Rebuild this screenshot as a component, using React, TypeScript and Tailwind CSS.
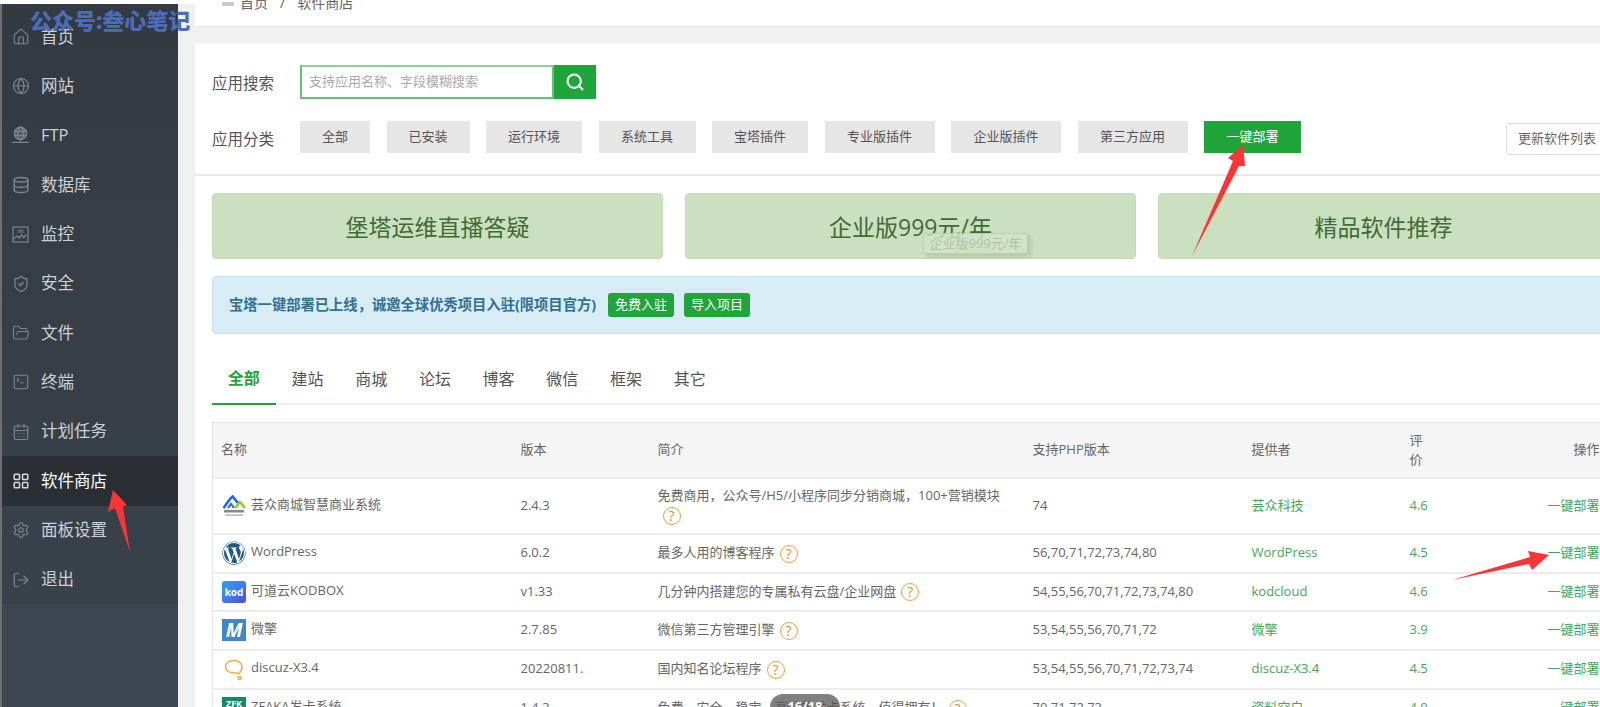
import { House, Globe, Database, ShieldCheck, FolderOpen, SquareTerminal, CalendarDays, LayoutGrid, Settings, LogOut, Search } from "lucide-react";
import { FaWordpress } from "react-icons/fa";
import type { ReactNode } from "react";

const FtpIcon = () => (
  <svg width="19" height="19" viewBox="0 0 18 18" fill="none" stroke="currentColor" strokeWidth="1.3">
    <circle cx="9" cy="7" r="5.8" fill="#6b7278" fillOpacity="0.5" />
    <ellipse cx="9" cy="7" rx="2.6" ry="5.8" />
    <path d="M3.4 5h11.2M3.4 9h11.2M9 13v2M1 15.5h16" />
  </svg>
);

const MonitorIcon = () => (
  <svg width="17" height="17" viewBox="0 0 17 17" fill="none" stroke="currentColor" strokeWidth="1.2">
    <rect x="1" y="1" width="15" height="15" />
    <rect x="5.5" y="3.5" width="6" height="3.5" fill="currentColor" fillOpacity="0.5" stroke="none" />
    <path d="M1.5 13l3.5-3 2.5 2 2-3.5 2 3 3-2.5" />
  </svg>
);

const menu: { label: string; icon: ReactNode; active?: boolean }[] = [
  { label: "首页", icon: <House size={18} strokeWidth={1.5} /> },
  { label: "网站", icon: <Globe size={18} strokeWidth={1.6} /> },
  { label: "FTP", icon: <FtpIcon /> },
  { label: "数据库", icon: <Database size={18} strokeWidth={2} /> },
  { label: "监控", icon: <MonitorIcon /> },
  { label: "安全", icon: <ShieldCheck size={18} strokeWidth={1.7} /> },
  { label: "文件", icon: <FolderOpen size={18} strokeWidth={1.5} /> },
  { label: "终端", icon: <SquareTerminal size={18} strokeWidth={1.5} /> },
  { label: "计划任务", icon: <CalendarDays size={18} strokeWidth={1.6} /> },
  { label: "软件商店", icon: <LayoutGrid size={18} strokeWidth={2} />, active: true },
  { label: "面板设置", icon: <Settings size={18} strokeWidth={1.6} /> },
  { label: "退出", icon: <LogOut size={18} strokeWidth={1.6} /> },
];

const categories: { label: string; w: string }[] = [
  { label: "全部", w: "w-[70px]" },
  { label: "已安装", w: "w-[83px]" },
  { label: "运行环境", w: "w-[96px]" },
  { label: "系统工具", w: "w-[97px]" },
  { label: "宝塔插件", w: "w-[96px]" },
  { label: "专业版插件", w: "w-[110px]" },
  { label: "企业版插件", w: "w-[110px]" },
  { label: "第三方应用", w: "w-[110px]" },
];

const tabs = ["全部", "建站", "商城", "论坛", "博客", "微信", "框架", "其它"];

const YunLogo = () => (
  <svg width="24" height="22" viewBox="0 0 24 22" fill="none">
    <path d="M1.5 13L8 4l2.6-2.5L16 8" stroke="#2563eb" strokeWidth="2.6" />
    <path d="M6 13l3-4 3 4" stroke="#2563eb" strokeWidth="2" />
    <path d="M13 13l5-6 5 6" stroke="#8cc81f" strokeWidth="2.4" />
    <rect x="2" y="15" width="20" height="2.5" fill="#555" fillOpacity="0.7" />
    <rect x="3" y="19.5" width="18" height="1.2" fill="#666" fillOpacity="0.6" />
  </svg>
);

const DiscuzLogo = () => (
  <svg width="24" height="24" viewBox="0 0 24 24" fill="none" stroke="#f3a84c" strokeWidth="1.5">
    <path d="M11.5 3.5c5 0 8.5 2.6 8.5 6.3 0 3.2-1.8 5.6-3.6 7.2-1-.8-2.6-1.2-4.5-1.2C7 15.800 3.500 13.500 3.500 9.800 3.500 6.100 7 3.500 11.500 3.500z" />
    <circle cx="17.500" cy="21" r="1.600" />
  </svg>
);

const rows: { logo: ReactNode; name: string; ver: string; desc: string; php: string; by: string; rate: string; h: string }[] = [
  { logo: <YunLogo />, name: "芸众商城智慧商业系统", ver: "2.4.3", desc: "免费商用\uFF0C公众号/H5/小程序同步分销商城\uFF0C100+营销模块", php: "74", by: "芸众科技", rate: "4.6", h: "h-[56px]" },
  { logo: <FaWordpress size={24} color="#1f5a85" />, name: "WordPress", ver: "6.0.2", desc: "最多人用的博客程序", php: "56,70,71,72,73,74,80", by: "WordPress", rate: "4.5", h: "h-[39px]" },
  {
    logo: <span className="flex h-[22px] w-[24px] items-center justify-center rounded-[3px] bg-gradient-to-br from-[#08a8f5] to-[#4f46e5] text-[10px] font-bold leading-none text-white">kod</span>,
    name: "可道云KODBOX", ver: "v1.33", desc: "几分钟内搭建您的专属私有云盘/企业网盘", php: "54,55,56,70,71,72,73,74,80", by: "kodcloud", rate: "4.6", h: "h-[38px]",
  },
  {
    logo: <span className="flex h-[22px] w-[24px] items-center justify-center bg-[#3f87c7] text-[19px] font-bold italic leading-none text-white">M</span>,
    name: "微擎", ver: "2.7.85", desc: "微信第三方管理引擎", php: "53,54,55,56,70,71,72", by: "微擎", rate: "3.9", h: "h-[39px]",
  },
  { logo: <DiscuzLogo />, name: "discuz-X3.4", ver: "20220811.", desc: "国内知名论坛程序", php: "53,54,55,56,70,71,72,73,74", by: "discuz-X3.4", rate: "4.5", h: "h-[39px]" },
  {
    logo: <span className="flex h-[22px] w-[24px] items-start justify-center bg-[#118a70] text-[9px] font-bold leading-[14px] text-white">ZFK</span>,
    name: "ZFAKA发卡系统", ver: "1.4.3", desc: "免费、安全、稳定、高效的发卡系统\uFF0C值得拥有\uFF01", php: "70,71,72,73", by: "资料空白", rate: "4.0", h: "h-[39px]",
  },
];

const Help = () => (
  <span className="ml-[5px] inline-flex h-[18px] w-[18px] items-center justify-center rounded-full border-[1.5px] border-[#f79a3e] align-middle text-[14px] leading-none text-[#f08a24]">?</span>
);

export default function App() {
  return (
    <div className="relative flex h-[707px] w-[1600px] overflow-hidden bg-[#f0f0f0] font-['Open_Sans','Noto_Sans_CJK_SC',sans-serif] text-[13px] text-[#666]">
      <div className="flex w-[195px] shrink-0 border-t-4 border-white">
        <div className="w-[2px] bg-[#6f6f6f]" />
        <aside className="w-[176px] bg-[#3d4650]">
          <nav className="bg-gradient-to-b from-[#343a42] to-[#39414a] pt-[8.5px]">
            {menu.map((m) => (
              <div
                key={m.label}
                className={`flex h-[49.33px] items-center gap-[11px] pl-[9px] text-[16.5px] ${m.active ? "bg-[#2a2f36] text-white" : "text-[#cdd1d5]"}`}
              >
                <span className={`flex w-[19px] justify-center ${m.active ? "text-[#d8dadc]" : "text-[#7d848b]"}`}>{m.icon}</span>
                {m.label}
              </div>
            ))}
          </nav>
        </aside>
      </div>

      <main className="w-[1431px] shrink-0">
        <div className="flex h-[27px] items-start gap-[6px] overflow-hidden border-b border-[#e6e6e6] bg-white pl-[27px] text-[14px]">
          <span className="mt-[2px] h-[4px] w-[12px] rounded-[1px] bg-[#c9c9c9]" />
          <span className="-mt-[8px]">首页</span>
          <span className="-mt-[8px] px-[6px]">/</span>
          <span className="-mt-[8px]">软件商店</span>
        </div>

        <section className="mt-[16px] h-[133px] border-b-2 border-[#e8e8e8] bg-white px-[17px]">
          <div className="flex items-center pt-[22px]">
            <span className="w-[88px] pt-[2px] text-[15.5px] leading-[32px] text-[#555]">应用搜索</span>
            <div className="flex h-[34px] w-[296px]">
              <div className="flex w-[254px] items-center border-2 border-[#62c377] border-t-[#8ad49a] bg-white pl-[7px] text-[#aaa]">支持应用名称、字段模糊搜索</div>
              <div className="flex w-[42px] items-center justify-center bg-[#20a53a] text-white">
                <Search size={20} strokeWidth={2.5} />
              </div>
            </div>
          </div>
          <div className="mt-[22px] flex items-start">
            <span className="w-[88px] pt-[2px] text-[15.5px] leading-[32px] text-[#555]">应用分类</span>
            <div className="flex gap-[16.5px]">
              {categories.map((c) => (
                <div key={c.label} className={`flex h-[32px] ${c.w} items-center justify-center bg-[#e6e6e6] text-[#555]`}>{c.label}</div>
              ))}
              <div className="flex h-[32px] w-[97px] items-center justify-center bg-[#20a53a] text-white">一键部署</div>
            </div>
            <div className="ml-[205px] mt-[2px] flex h-[32px] w-[101px] shrink-0 items-center rounded-[3px] border border-[#ddd] pl-[11px] text-[#666]">更新软件列表</div>
          </div>
        </section>

        <section className="h-[600px] bg-white px-[17px] pt-[17px]">
          <div className="flex gap-[22px]">
            {["堡塔运维直播答疑", "企业版999元/年", "精品软件推荐"].map((t) => (
              <div key={t} className="flex h-[66px] w-[451px] items-center justify-center rounded-[4px] border border-[#c4dcb5] bg-[#cbe0be] pt-[3px] text-[23px] text-[#3f6b36]">{t}</div>
            ))}
          </div>

          <div className="mt-[17px] flex h-[58px] items-center rounded-[4px] border border-[#bfe3f0] bg-[#d8ecf6] pl-[16px] text-[14.3px] font-bold text-[#31708f]">
            {"宝塔一键部署已上线\uFF0C诚邀全球优秀项目入驻(限项目官方)"}
            <span className="ml-[12px] flex h-[24px] w-[66px] items-center justify-center rounded-[3px] bg-[#20a53a] text-[13px] font-normal text-white">免费入驻</span>
            <span className="ml-[10px] flex h-[24px] w-[66px] items-center justify-center rounded-[3px] bg-[#20a53a] text-[13px] font-normal text-white">导入项目</span>
          </div>

          <div className="mt-[16px] flex h-[55px] border-b-2 border-[#eee]">
            {tabs.map((t, i) => (
              <div
                key={t}
                className={`-mb-[2px] flex h-[55px] w-[63.7px] items-center justify-center pt-[2px] text-[16px] ${i === 0 ? "border-b-2 border-[#20a53a] font-bold text-[#20a53a]" : "text-[#555]"}`}
              >
                {t}
              </div>
            ))}
          </div>

          <table className="mt-[17px] w-[1397px] table-fixed border-l border-t border-[#e2e2e2]">
            <colgroup>
              <col className="w-[300px]" />
              <col className="w-[137px]" />
              <col className="w-[375px]" />
              <col className="w-[219px]" />
              <col className="w-[158px]" />
              <col className="w-[40px]" />
              <col className="w-[168px]" />
            </colgroup>
            <thead>
              <tr className="h-[55px] border-b-2 border-[#ececec] bg-[#f5f5f5] text-left text-[#666]">
                <th className="pl-[8px] font-normal">名称</th>
                <th className="pl-[8px] font-normal">版本</th>
                <th className="pl-[8px] font-normal">简介</th>
                <th className="pl-[8px] font-normal">支持PHP版本</th>
                <th className="pl-[8px] font-normal">提供者</th>
                <th className="px-[8px] font-normal leading-[19px]">评价</th>
                <th className="pr-[10px] text-right font-normal">操作</th>
              </tr>
            </thead>
            <tbody>
              {rows.map((r) => (
                <tr key={r.name} className={`${r.h} border-b-2 border-[#ececec]`}>
                  <td className="pl-[9px]">
                    <div className="flex items-center gap-[5px]">
                      <span className="flex w-[24px] shrink-0 justify-center">{r.logo}</span>
                      <span className="-mt-[2px]">{r.name}</span>
                    </div>
                  </td>
                  <td className="pl-[8px]">{r.ver}</td>
                  <td className="pl-[8px] pr-[9px] leading-[19px]">{r.desc}<Help /></td>
                  <td className="pl-[8px]">{r.php}</td>
                  <td className="pl-[8px] text-[#3fa85a]">{r.by}</td>
                  <td className="pl-[8px] text-[#3fa85a]">{r.rate}</td>
                  <td className="pr-[10px] text-right text-[#3fa85a]">一键部署</td>
                </tr>
              ))}
            </tbody>
          </table>
        </section>
      </main>

      {/* overlays */}
      <div className="absolute left-[30px] top-[6px] whitespace-nowrap text-[22px] font-black leading-[28px] text-[#4a6dbb]">公众号:叁心笔记</div>
      <div className="absolute left-[923px] top-[233px] flex h-[21px] w-[105px] items-center justify-center border border-[#bcd0ae] bg-[#d2e4c8]/80 text-[#aec3a3] shadow-[3px_3px_4px_rgba(0,0,0,0.1)]">企业版999元/年</div>
      <div className="absolute left-[770px] top-[694px] flex h-[26px] w-[70px] items-center justify-center rounded-full bg-[#555]/75 font-bold text-white">16/18</div>
      <svg className="pointer-events-none absolute left-0 top-0" width="1600" height="707" viewBox="0 0 1600 707" fill="#fb3535">
        <polygon points="1192,256 1233,161 1228,158 1243,145 1245,166 1239,166" />
        <polygon points="113,490 127,505 123,507 130,552 115,508 108,512" />
        <polygon points="1549,555 1528,551 1530,557 1452,580 1529,564 1532,570" />
      </svg>
    </div>
  );
}
